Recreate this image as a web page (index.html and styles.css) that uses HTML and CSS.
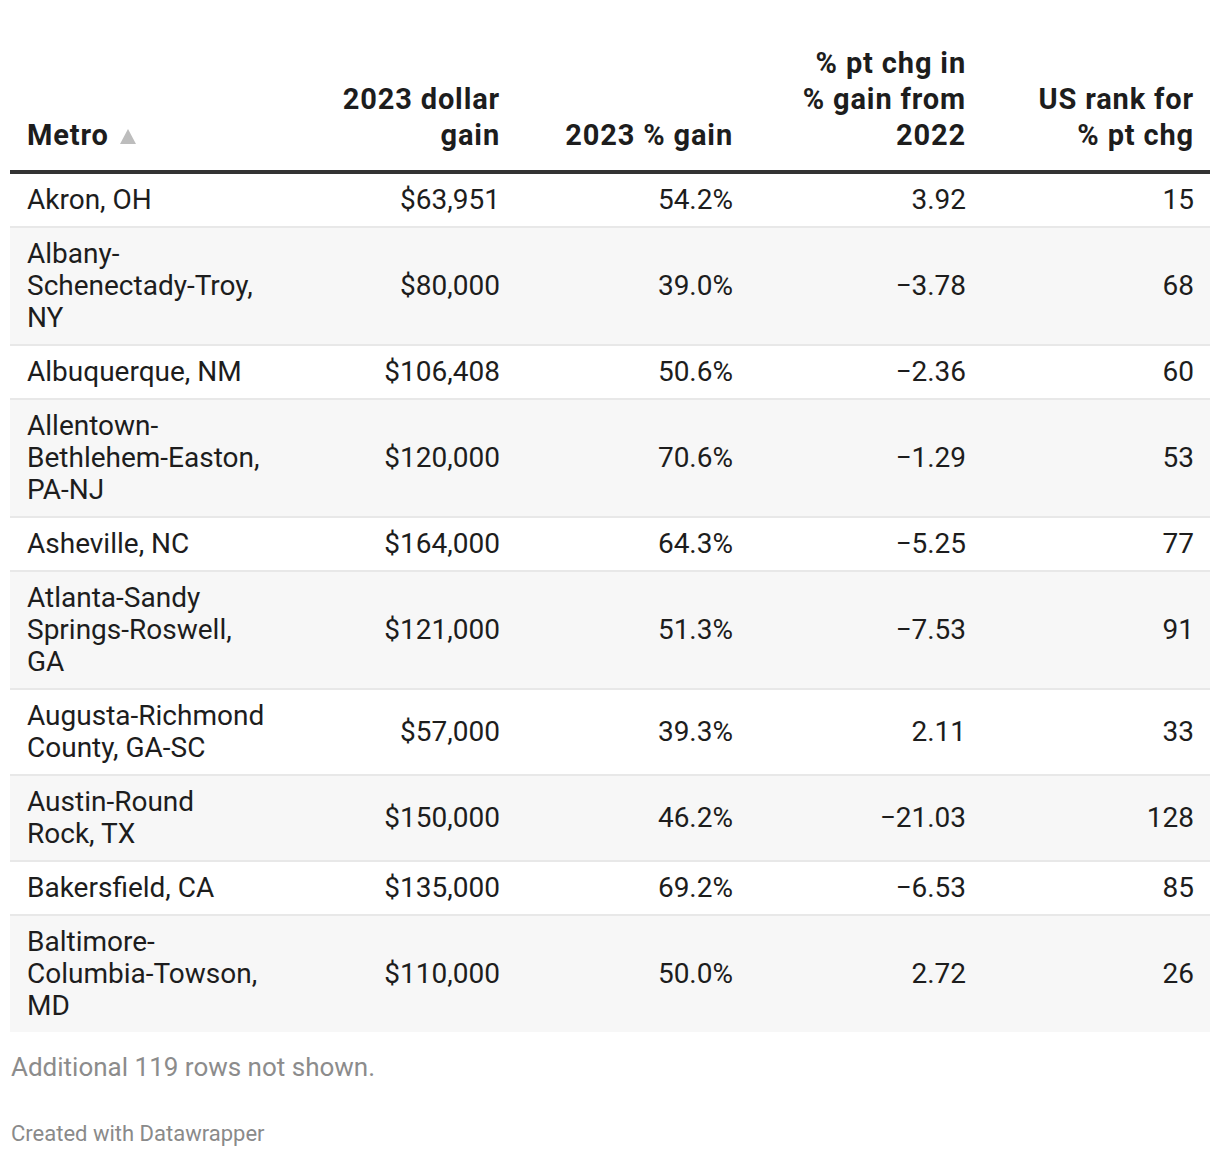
FILE: index.html
```html
<!DOCTYPE html>
<html>
<head>
<meta charset="utf-8">
<link rel="stylesheet" href="styles.css">
</head>
<body>
<div class="chart">
  <table class="tbl">
    <colgroup>
      <col class="c1"><col class="c2"><col class="c3"><col class="c4"><col class="c5">
    </colgroup>
    <thead>
      <tr>
        <th class="left">Metro <span class="sort"></span></th>
        <th>2023 dollar gain</th>
        <th>2023 % gain</th>
        <th>% pt chg in % gain from 2022</th>
        <th class="last">US rank for % pt chg</th>
      </tr>
    </thead>
    <tbody>
      <tr><td class="left">Akron, OH</td><td>$63,951</td><td>54.2%</td><td>3.92</td><td>15</td></tr>
      <tr><td class="left">Albany-Schenectady-Troy, NY</td><td>$80,000</td><td>39.0%</td><td>−3.78</td><td>68</td></tr>
      <tr><td class="left">Albuquerque, NM</td><td>$106,408</td><td>50.6%</td><td>−2.36</td><td>60</td></tr>
      <tr><td class="left">Allentown-Bethlehem-Easton, PA-NJ</td><td>$120,000</td><td>70.6%</td><td>−1.29</td><td>53</td></tr>
      <tr><td class="left">Asheville, NC</td><td>$164,000</td><td>64.3%</td><td>−5.25</td><td>77</td></tr>
      <tr><td class="left">Atlanta-Sandy Springs-Roswell, GA</td><td>$121,000</td><td>51.3%</td><td>−7.53</td><td>91</td></tr>
      <tr><td class="left">Augusta-Richmond County, GA-SC</td><td>$57,000</td><td>39.3%</td><td>2.11</td><td>33</td></tr>
      <tr><td class="left">Austin-Round Rock, TX</td><td>$150,000</td><td>46.2%</td><td>−21.03</td><td>128</td></tr>
      <tr><td class="left">Bakersfield, CA</td><td>$135,000</td><td>69.2%</td><td>−6.53</td><td>85</td></tr>
      <tr><td class="left">Baltimore-Columbia-Towson, MD</td><td>$110,000</td><td>50.0%</td><td>2.72</td><td>26</td></tr>
    </tbody>
  </table>
  <div class="more">Additional 119 rows not shown.</div>
  <div class="credit">Created with Datawrapper</div>
</div>
</body>
</html>
```

FILE: styles.css
```css
html, body {
  margin: 0;
  padding: 0;
  background: #ffffff;
}
body {
  font-family: Roboto, "Liberation Sans", sans-serif;
  color: #1d1d1d;
}
.chart {
  padding: 37px 10px 0 10px;
}
.tbl {
  width: 1200px;
  border-collapse: collapse;
  table-layout: fixed;
}
.c1 { width: 273px; }
.c2 { width: 233px; }
.c3 { width: 233px; }
.c4 { width: 233px; }
.c5 { width: 228px; }

.tbl th {
  font-weight: 700;
  font-size: 29px;
  line-height: 36px;
  letter-spacing: 0.85px;
  text-align: right;
  vertical-align: bottom;
  padding: 8px 16px 17px 45px;
  border-bottom: 4px solid #333333;
  color: #1d1d1d;
}
.tbl th.last { padding-left: 38px; }
.tbl th.left {
  text-align: left;
  padding-left: 17px;
}
.sort {
  display: inline-block;
  width: 0;
  height: 0;
  border-left: 8px solid transparent;
  border-right: 8px solid transparent;
  border-bottom: 15px solid #bdbdbd;
  margin-left: 3px;
  vertical-align: 1px;
}
.tbl td {
  font-size: 28px;
  line-height: 32px;
  text-align: right;
  vertical-align: middle;
  padding: 10px 16px 10px 17px;
  border-bottom: 2px solid #e8e8e8;
}
.tbl td.left {
  text-align: left;
  padding-right: 16px;
}
.tbl tbody tr:nth-child(even) td {
  background: #f7f7f7;
}
.tbl tbody tr:last-child td {
  border-bottom: none;
}
.more {
  margin-top: 19px;
  padding-left: 1px;
  font-size: 26px;
  line-height: 32px;
  color: #8c8c8c;
}
.credit {
  margin-top: 37px;
  padding-left: 1px;
  font-size: 22px;
  line-height: 28px;
  color: #8a8a8a;
}
```
